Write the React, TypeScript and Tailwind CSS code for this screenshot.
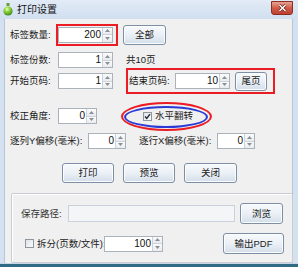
import React from "react";

const FONT = "font-['Liberation_Sans','Noto_Sans_CJK_SC',sans-serif]";

function Spinner({ w, value }: { w: string; value: string }) {
  return (
    <div className={`flex h-[16px] ${w} border border-[#aab2bc] bg-white`}>
      <div className="flex-1 flex items-center justify-end pr-[1px] text-[10px] leading-none text-[#111]">
        {value}
      </div>
      <div className="w-[10px] flex flex-col border-l border-[#cdd3da]">
        <div className="flex-1 flex items-center justify-center bg-linear-to-b from-[#fbfbfb] to-[#e9ebee] border-b border-[#cdd3da]">
          <svg width="5" height="3" viewBox="0 0 5 3">
            <path d="M0 3 L2.5 0 L5 3 Z" fill="#8a8f96" />
          </svg>
        </div>
        <div className="flex-1 flex items-center justify-center bg-linear-to-b from-[#fbfbfb] to-[#e9ebee]">
          <svg width="5" height="3" viewBox="0 0 5 3">
            <path d="M0 0 L2.5 3 L5 0 Z" fill="#8a8f96" />
          </svg>
        </div>
      </div>
    </div>
  );
}

function Btn({ cls, children }: { cls: string; children: React.ReactNode }) {
  return (
    <div
      className={`${cls} flex items-center justify-center rounded-[3px] border border-[#7d8fa4] bg-linear-to-b from-[#f8fafc] via-[#ebf0f6] to-[#d3dee9] shadow-[inset_0_0_0_1px_#fbfcfe] text-[9.5px] leading-none text-[#1a1a1a]`}
    >
      {children}
    </div>
  );
}

function Check({ checked }: { checked?: boolean }) {
  return (
    <div className="w-[9px] h-[9px] border border-[#8e96a0] bg-linear-to-br from-[#dfe3e8] to-[#fafafa] flex items-center justify-center">
      {checked && (
        <svg width="7" height="7" viewBox="0 0 7 7">
          <path d="M1 3.5 L2.8 5.5 L6 1.2" stroke="#1d2a3a" strokeWidth="1.4" fill="none" />
        </svg>
      )}
    </div>
  );
}

function Label({ cls, children }: { cls: string; children: React.ReactNode }) {
  return <div className={`${cls} text-[9.5px] leading-none text-[#1a1a1a] whitespace-nowrap`}>{children}</div>;
}

export default function App() {
  return (
    <div className={`w-[298px] h-[267px] relative overflow-hidden bg-[#d3e1f1] ${FONT}`}>
      {/* title bar */}
      <div className="h-[19px] flex items-center bg-linear-to-b from-[#e2ebf6] to-[#d0dfef]">
        <div className="ml-[3px] w-[10px] h-[13px] flex items-center justify-center">
          <svg width="10" height="13" viewBox="0 0 10 13">
            <defs>
              <radialGradient id="g" cx="0.4" cy="0.3" r="0.7">
                <stop offset="0" stopColor="#e6ffb0" />
                <stop offset="0.45" stopColor="#8cd03a" />
                <stop offset="1" stopColor="#3d8a1a" />
              </radialGradient>
            </defs>
            <rect x="3.5" y="0" width="3" height="3" fill="#6a9a3a" />
            <ellipse cx="5" cy="8" rx="4.6" ry="4.6" fill="url(#g)" />
          </svg>
        </div>
        <div className="ml-[4px] text-[10px] leading-none text-[#111]">打印设置</div>
        <div className="ml-auto mr-[5px] self-start mt-[1px] w-[22px] h-[14px] rounded-b-[3px] border border-[#8c2c23] bg-linear-to-b from-[#e6a392] via-[#cf5a48] to-[#c0402f] flex items-center justify-center">
          <svg width="9" height="8" viewBox="0 0 9 8">
            <path d="M1.5 1 L7.5 7 M7.5 1 L1.5 7" stroke="#5a1a14" strokeWidth="2.6" />
            <path d="M1.5 1 L7.5 7 M7.5 1 L1.5 7" stroke="#ffffff" strokeWidth="1.5" />
          </svg>
        </div>
      </div>

      {/* body */}
      <div className="ml-[4px] w-[289px] h-[244px] bg-[#f0f0f0] border-l border-r border-[#b7c6d6] flex flex-col relative">
        {/* row 1 */}
        <div className="mt-[4px] h-[23px] flex items-center">
          <Label cls="ml-[5px] w-[46px]">标签数量:</Label>
          <div className="w-[62px] h-[22px] border-2 border-[#ec1c24] flex items-center">
            <Spinner w="w-[55px]" value="200" />
          </div>
          <Btn cls="ml-[5px] w-[43px] h-[20px]">全部</Btn>
        </div>
        {/* row 2 */}
        <div className="mt-[6px] h-[16px] flex items-center">
          <Label cls="ml-[5px] w-[48px]">标签份数:</Label>
          <Spinner w="w-[55px]" value="1" />
          <Label cls="ml-[13px]">共10页</Label>
        </div>
        {/* row 3 */}
        <div className="mt-[0px] h-[26px] flex items-center">
          <Label cls="ml-[5px] w-[48px]">开始页码:</Label>
          <Spinner w="w-[55px]" value="1" />
          <div className="ml-[13px] w-[149px] h-[26px] border-2 border-[#ec1c24] flex items-center">
            <Label cls="ml-[1px] w-[46px]">结束页码:</Label>
            <Spinner w="w-[55px]" value="10" />
            <Btn cls="ml-[5px] w-[32px] h-[19px]">尾页</Btn>
          </div>
        </div>
        {/* row 4 */}
        <div className="mt-[14px] h-[16px] flex items-center relative">
          <Label cls="ml-[5px] w-[48px]">校正角度:</Label>
          <Spinner w="w-[39px]" value="0" />
          <div className="ml-[46px]">
            <Check checked />
          </div>
          <Label cls="ml-[3px]">水平翻转</Label>
          <div className="absolute left-[116px] top-[-6px] w-[91px] h-[29px] rounded-[50%] border-2 border-[#ec1c24]" />
          <div className="absolute left-[119px] top-[-2px] w-[84px] h-[22px] rounded-[50%] border-2 border-[#2a3bd6]" />
        </div>
        {/* row 5 */}
        <div className="mt-[9px] h-[16px] flex items-center">
          <Label cls="ml-[5px] w-[78px]">逐列Y偏移(毫米):</Label>
          <Spinner w="w-[38px]" value="0" />
          <Label cls="ml-[13px] w-[78px]">逐行X偏移(毫米):</Label>
          <Spinner w="w-[38px]" value="0" />
        </div>
        {/* buttons */}
        <div className="mt-[14px] h-[20px] flex items-center">
          <Btn cls="ml-[57px] w-[52px] h-[20px] border-[#5f7a99]">打印</Btn>
          <Btn cls="ml-[9px] w-[52px] h-[20px]">预览</Btn>
          <Btn cls="ml-[9px] w-[53px] h-[20px]">关闭</Btn>
        </div>
        {/* group box */}
        <div className="mt-[10px] ml-[6px] w-[282px] h-[70px] border border-[#c9cdd2] shadow-[inset_1px_1px_0_#ffffff] rounded-[2px] flex flex-col">
          <div className="mt-[9px] h-[21px] flex items-center">
            <Label cls="ml-[9px] w-[47px] text-[#333]">保存路径:</Label>
            <div className="w-[167px] h-[17px] border border-[#c7d2de] bg-[#f4f5f7]" />
            <Btn cls="ml-[5px] w-[43px] h-[21px]">浏览</Btn>
          </div>
          <div className="mt-[9px] h-[21px] flex items-center">
            <div className="ml-[13px]">
              <Check />
            </div>
            <Label cls="ml-[3px] w-[67px]">拆分(页数/文件):</Label>
            <Spinner w="w-[59px]" value="100" />
            <Btn cls="ml-auto mr-[8px] w-[61px] h-[21px]">输出PDF</Btn>
          </div>
        </div>
      </div>
      {/* bottom edge */}
      <div className="h-[1px] bg-[#c7d6e6]" />
      <div className="h-[3px] bg-[#2e6a86]" />
    </div>
  );
}
